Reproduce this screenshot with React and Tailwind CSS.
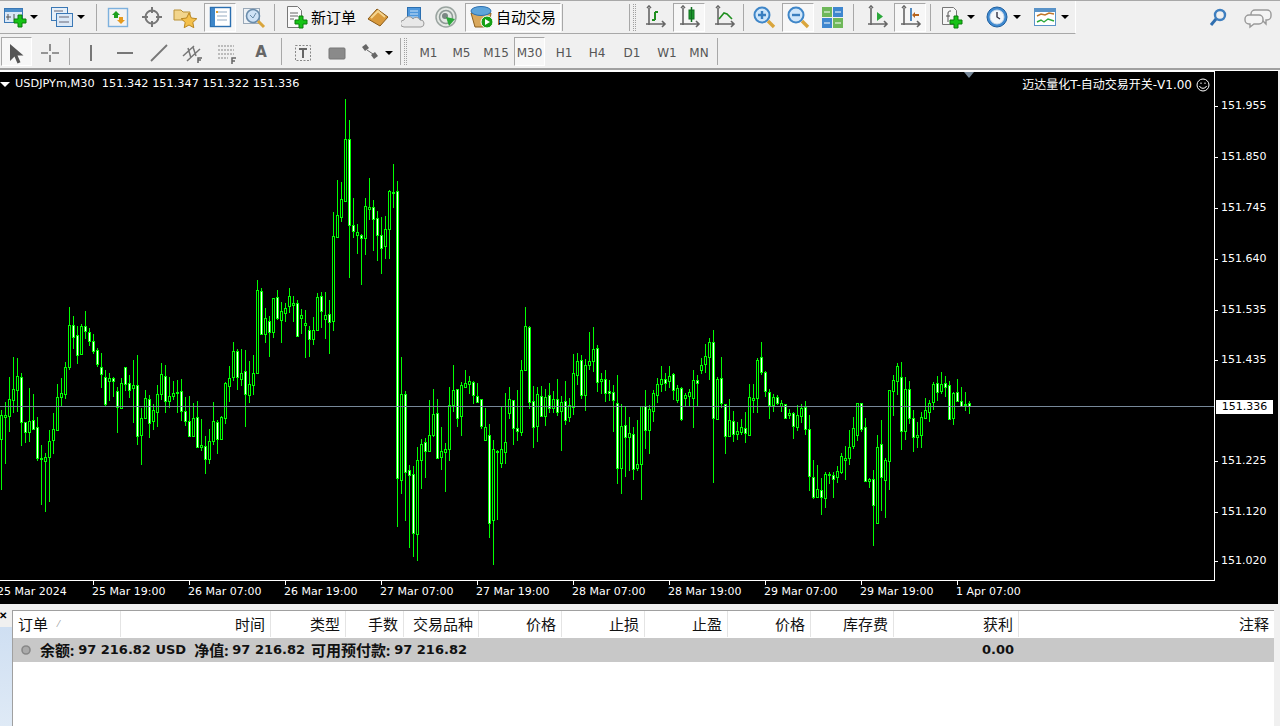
import React from 'react'

// candles read off the chart: [high, low, bodyTop, bodyBottom, isDown], y values in 3x units from a base y
const A = [[390,630,405,476,0],[365,552,405,411,0],[291,456,358,407,0],[231,400,328,360,0],[234,395,289,329,0],[279,498,292,425,1],[426,490,427,455,1],[324,485,424,455,0],[342,450,421,446,1],[411,543,442,533,1],[495,675,534,537,0],[519,696,532,542,0],[450,666,484,530,0],[400,522,448,479,0],[312,450,352,449,0],[294,378,340,352,0],[247,357,262,341,0],[82,270,136,261,0],[108,207,136,170,1],[138,252,166,224,1],[133,225,139,221,0],[94,178,139,152,1],[145,198,157,182,1],[162,221,184,212,1],[205,261,211,251,1],[219,324,262,281,1],[270,378,292,371,1],[280,362,295,302,0],[292,351,294,302,1],[321,459,334,380,1],[295,384,310,383,0],[262,333,262,311,1],[285,354,310,329,1],[240,430,316,323,0],[225,495,316,467,1],[385,555,415,464,0],[330,415,355,413,0],[345,474,358,428,1],[372,450,391,422,0],[315,441,343,395,0],[250,360,283,341,0],[255,399,289,362,1],[292,384,349,362,0],[303,360,340,347,0],[300,399,336,339,0],[297,423,334,392,1],[350,438,394,422,1],[348,471,424,468,1],[369,469,415,467,0],[363,500,412,500,1],[417,513,496,500,0],[468,582,499,536,1],[447,552,484,536,0],[366,495,424,482,0],[420,522,427,476,1],[408,480,412,476,0],[306,432,310,413,0],[259,366,295,317,0],[186,303,214,291,0],[208,330,214,292,1],[207,318,280,296,0],[209,441,274,341,1],[243,369,313,344,0],[225,345,280,314,0],[0,282,31,278,0],[25,165,34,163,1],[84,189,115,161,0],[108,231,122,157,1],[54,174,55,155,0],[30,120,52,115,1],[66,189,94,119,0],[69,126,85,98,0],[24,99,49,79,0],[48,126,69,75,0],[60,171,70,169,1],[87,162,106,113,0],[90,234,129,134,0],[138,231,151,176,1],[112,195,151,178,0],[39,150,52,149,0]]
const B = [[606,714,619,662,1],[606,747,676,686,0],[630,792,673,695,1],[366,723,439,692,0],[270,440,376,440,0],[276,396,328,380,0],[27,333,148,332,0],[90,564,148,404,1],[324,444,406,422,1],[402,492,427,434,0],[432,585,435,443,1],[324,495,349,444,0],[264,390,351,357,0],[330,483,352,386,1],[363,513,385,434,1],[381,552,436,473,1],[378,507,418,467,0],[300,507,304,416,0],[222,354,306,309,0]]
const C = [[-447,590,-416,443,1],[82,492,193,449,0],[183,573,193,425,1],[405,654,421,434,1],[408,681,433,608,1],[351,693,391,611,0],[327,477,343,389,0],[324,444,337,362,1],[210,366,316,362,0],[178,321,253,314,0],[207,387,250,383,1],[291,420,364,381,0],[339,486,358,365,0],[171,393,226,356,0],[105,246,181,224,0],[177,291,178,263,1],[156,318,166,257,0],[120,171,160,170,0],[138,192,154,161,0],[153,222,157,196,1],[159,219,199,215,1],[207,297,208,287,1],[234,330,292,329,0],[282,624,316,578,1],[330,705,358,571,0],[360,570,363,366,0],[229,414,358,398,0],[189,402,337,365,0],[171,267,208,248,0],[210,345,211,293,1],[180,333,295,302,1],[90,318,121,305,0],[-69,120,-12,120,0],[-12,237,-9,215,1],[168,354,214,290,1],[171,336,193,287,0],[168,258,199,257,1],[177,288,202,257,0],[159,249,196,235,1],[183,249,208,235,0],[147,258,208,245,1]]
const D = [[228,393,247,272,0],[183,315,244,299,1],[235,306,256,292,0],[102,285,160,262,0],[99,195,124,164,0],[105,237,121,224,1],[117,273,136,224,0],[36,150,124,134,0],[21,156,88,124,0],[75,216,85,185,1],[159,222,178,183,0],[150,246,178,218,1],[180,243,214,220,1],[195,336,217,241,1],[165,492,250,445,1],[252,522,319,443,0],[258,471,316,352,1],[291,453,340,350,0],[321,480,343,448,1],[300,453,433,443,0],[258,540,259,431,0],[210,387,259,329,1],[255,402,268,331,0],[210,306,220,272,0],[174,249,193,224,0],[138,216,178,193,0],[159,213,178,190,1],[138,204,169,184,0],[159,240,163,211,1],[195,249,205,239,0],[202,303,205,298,1],[220,261,226,235,0],[207,261,217,229,0],[150,324,181,235,0],[166,261,181,190,1],[115,162,136,151,0],[72,160,109,133,0],[54,180,67,112,0],[30,489,67,295,1],[172,300,178,296,0],[111,264,175,250,1],[253,402,253,349,1],[238,351,301,349,0],[273,366,304,343,1],[306,360,334,343,0],[297,345,322,335,0],[277,369,325,340,1],[193,346,232,346,0],[192,279,235,239,0],[115,279,121,235,0],[66,165,112,157,1],[153,231,157,214,1],[207,297,217,254,1],[222,276,232,254,0],[225,255,232,250,1]]
const E = [[150,186,160,167,0],[163,207,163,205,1],[177,207,190,196,0],[186,267,190,229,1],[165,243,196,231,0],[162,219,175,199,0],[153,255,172,238,1],[195,423,238,379,1],[330,447,382,442,1],[345,444,418,442,0],[384,495,421,442,1],[366,474,373,445,0],[366,402,372,376,0],[366,444,376,388,1],[348,399,364,382,0],[309,372,319,365,0],[288,390,325,331,0],[240,345,292,325,0],[201,297,235,289,0],[159,273,160,256,0],[160,246,160,236,1],[205,396,232,394,1],[385,414,388,394,0],[361,588,388,464,1],[255,522,292,520,0],[210,483,283,382,1],[324,504,331,391,0],[121,420,121,334,0],[75,198,91,124,0],[39,135,49,94,0],[36,300,82,244,1],[81,270,118,244,0],[93,222,118,205,1],[180,306,205,262,1],[216,294,256,260,0],[186,294,202,256,0],[144,207,181,205,0],[150,216,160,187,0],[97,180,103,157,0],[78,153,100,127,1],[66,132,103,124,0],[78,141,100,112,1],[94,209,106,208,1],[126,225,130,205,0],[87,157,127,154,1],[111,172,154,169,1],[126,183,162,166,0],[153,192,160,169,1]]

const candles = [[A,280],[B,90],[C,330],[D,320],[E,350]].flatMap(([rows, base]) =>
  rows.map(r => [
    Math.round(base + r[0] / 3),
    Math.round(base + r[1] / 3),
    Math.round(base + r[2] / 3),
    Math.round(base + r[3] / 3),
    r[4],
  ]))

const PRICES = [['151.955',105],['151.850',156],['151.745',207],['151.640',258],['151.535',309],['151.435',359],['151.225',460],['151.120',511],['151.020',560]]
const TIMES = ['25 Mar 19:00','26 Mar 07:00','26 Mar 19:00','27 Mar 07:00','27 Mar 19:00','28 Mar 07:00','28 Mar 19:00','29 Mar 07:00','29 Mar 19:00','1 Apr 07:00']
const HEAD = ['时间','类型','手数','交易品种','价格','止损','止盈','价格','库存费','获利','注释']
const TF = [['M1',33],['M5',33],['M15',36],['M30',31],['H1',38],['H4',28],['D1',42],['W1',28],['MN',36]]

const tahoma = { fontFamily: '"DejaVu Sans", sans-serif' }
const cjkOnly = { fontFamily: '"Noto Sans CJK SC", sans-serif' }
const gridCols = 'grid grid-cols-[108px_150px_75px_58px_75px_83px_83px_83px_83px_83px_125px_255px]'

function Tool({ w = 32, on, children, className = '' }) {
  return (
    <div className={`shrink-0 h-[29px] flex items-center justify-center border ${on ? 'border-t-[#a8a8a8] border-l-[#a8a8a8] border-r-white border-b-white bg-[#f7f7f7]' : 'border-transparent'} ${className}`}
      style={{ width: w }}>
      {children}
    </div>
  )
}
const Caret = () => (
  <div className="shrink-0 w-[8px] flex justify-center">
    <div className="w-0 h-0 border-x-[4px] border-x-transparent border-t-[4px] border-t-black" />
  </div>
)
const Sep = ({ ml = 0, mr = 0 }) => <div className="shrink-0 w-[1px] h-[27px] bg-[#a8a8a8]" style={{ marginLeft: ml, marginRight: mr }} />
const Gap = ({ w }) => <div className="shrink-0" style={{ width: w }} />
const Grip = () => <div className="shrink-0 w-[3px] h-[27px] border-x border-dotted border-[#a0a0a0]" />

const Ico = ({ children, w = 24, h = 24 }) => (
  <svg width={w} height={h} viewBox={`0 0 ${w} ${h}`} fill="none">{children}</svg>
)
const Plus = ({ x = 0, y = 0 }) => (
  <path transform={`translate(${x} ${y})`} d="M4 0h4v4h4v4H8v4H4V8H0V4h4z" fill="#16c316" stroke="#0a7d0a" />
)
const Axes = ({ c = '#666' }) => (
  <path d="M6 3v17M3 6h0M3 19h19M19 16l3 3-3 3M8 3L6 1 4 3" stroke={c} strokeWidth="1.6" />
)

function IcoNewChart() {
  return <Ico><rect x="1.5" y="3.5" width="18" height="14" fill="#dbe8f6" stroke="#3b78b5" /><rect x="2" y="4" width="17" height="3" fill="#4d8fcb" /><path d="M5 9v6M3 12h5M11 9v5" stroke="#555" /><Plus x={11} y={10} /></Ico>
}
function IcoProfiles() {
  return <Ico><rect x="1.5" y="2.5" width="16" height="13" fill="#e6eff8" stroke="#3b78b5" /><rect x="6.5" y="8.5" width="16" height="13" fill="#dbe8f6" stroke="#3b78b5" /><path d="M4 6h9M9 12h10M9 17h10" stroke="#667" /></Ico>
}
function IcoMarket() {
  return <Ico><rect x="2.5" y="3.5" width="19" height="18" fill="#f3f3f3" stroke="#7db1de" strokeWidth="1.4" /><path d="M10 6l4 4h-2v3H8v-3H6z" fill="#1fa01f" /><path d="M15 19l-4-4h2v-3h4v3h2z" fill="#e69a1d" /></Ico>
}
function IcoCross() {
  return <Ico><circle cx="12" cy="12" r="6.5" stroke="#777" strokeWidth="2" /><path d="M12 2v6M12 16v6M2 12h6M16 12h6" stroke="#777" strokeWidth="2" /></Ico>
}
function IcoNav() {
  return <Ico><path d="M1 5h7l2 2h7v8H1z" fill="#f2d58c" stroke="#b99136" /><path d="M16 8l2.4 5 5.4.7-4 3.7 1 5.3-4.8-2.7-4.8 2.7 1-5.3-4-3.7 5.4-.7z" fill="#f4c04c" stroke="#b98620" /></Ico>
}
function IcoTerminal() {
  return <Ico><rect x="2.5" y="2.5" width="20" height="19" fill="#fff" stroke="#2b6fb0" strokeWidth="1.4" /><rect x="3" y="3" width="4" height="18" fill="#3d86c9" /><path d="M9 7h10M9 11h10M9 15h10" stroke="#b9c7d6" strokeWidth="1.4" /><path d="M8 7h2" stroke="#e0a030" strokeWidth="2" /></Ico>
}
function IcoTester() {
  return <Ico><rect x="1.5" y="3.5" width="16" height="15" fill="#eef2f6" stroke="#9aa9b8" /><circle cx="11" cy="11" r="6.5" fill="#cfe2f5" stroke="#6a8cab" strokeWidth="1.6" /><path d="M8 10l3 3 3-5" stroke="#6a8cab" /><path d="M16 16l6 6" stroke="#d9a53c" strokeWidth="3" /></Ico>
}
function IcoOrder() {
  return <Ico><path d="M3.5 1.5h10l4 4v17h-14z" fill="#fafafa" stroke="#777" /><path d="M6 8h8M6 11h8M6 14h4" stroke="#666" /><Plus x={11} y={11} /></Ico>
}
function IcoBook() {
  return <Ico><path d="M2 14L11 4l11 8-8 9z" fill="#d99a3c" stroke="#8a5a17" /><path d="M5 13l7-7 7 6" stroke="#f5d691" strokeWidth="2" /></Ico>
}
function IcoCloud() {
  return <Ico><rect x="6.5" y="2.5" width="13" height="14" fill="#4d97dc" stroke="#2b6fb0" /><path d="M9 6h8M9 9h8M9 12h8" stroke="#cfe4f8" /><path d="M3 22a3.5 3.5 0 010-7 5 5 0 019-1 4 4 0 017 1 3.5 3.5 0 011 7z" fill="#e8e8e8" stroke="#999" /></Ico>
}
function IcoSignal() {
  return <Ico><circle cx="12" cy="12" r="10" fill="#e4e8e4" stroke="#9aa4a0" strokeWidth="1.5" /><circle cx="12" cy="12" r="6.5" stroke="#8e9a96" strokeWidth="1.5" /><circle cx="11" cy="11" r="3" fill="#7b8783" /><path d="M12 12l3 9 6-7z" fill="#2ba83a" /></Ico>
}
function IcoAuto() {
  return <Ico><path d="M1 8h20l-2 14H5z" fill="#d9a85c" stroke="#8a5f1e" /><ellipse cx="11" cy="6" rx="10" ry="4.5" fill="#5ea5db" stroke="#2b6fb0" /><circle cx="17" cy="17" r="6" fill="#16a016" stroke="#fff" /><path d="M15 14l5 3-5 3z" fill="#fff" /></Ico>
}
function IcoBars() {
  return <Ico><Axes /><path d="M12 7v8M12 7h3M9 15h3" stroke="#1f8f1f" strokeWidth="2" /></Ico>
}
function IcoCandle() {
  return <Ico><Axes /><rect x="12" y="5" width="5" height="9" fill="#1f9f2f" stroke="#0f6f1f" /><path d="M14.5 2v15" stroke="#0f6f1f" strokeWidth="1.5" /></Ico>
}
function IcoLine() {
  return <Ico><Axes /><path d="M7 14l5-6 3 1 5 5" stroke="#1f8f1f" strokeWidth="1.6" /></Ico>
}
function IcoZoom({ minus }) {
  return (
    <Ico>
      <circle cx="10" cy="10" r="7.5" fill="#cfe6fa" stroke="#3f86c8" strokeWidth="2" />
      <path d={minus ? 'M6 10h8' : 'M6 10h8M10 6v8'} stroke="#3a7fc0" strokeWidth="2.4" />
      <path d="M16 16l6 6" stroke="#d9a53c" strokeWidth="3.4" />
    </Ico>
  )
}
function IcoTile() {
  return <Ico><rect x="2" y="2" width="10" height="10" fill="#6fb85a" /><rect x="13" y="2" width="10" height="10" fill="#3f87cf" /><rect x="2" y="13" width="10" height="10" fill="#3f87cf" /><rect x="13" y="13" width="10" height="10" fill="#6fb85a" /><path d="M4 7h6M15 7h6M4 18h6M15 18h6" stroke="#fff" /></Ico>
}
function IcoScroll() {
  return <Ico><Axes /><path d="M12 7v9l6-4.5z" fill="#2ba83a" /></Ico>
}
function IcoShift() {
  return <Ico><Axes /><path d="M13 3v13" stroke="#2b6fb0" strokeWidth="1.6" /><path d="M21 9h-4V7l-3 3 3 3v-2h4z" fill="#b8641c" /></Ico>
}
function IcoIndicators() {
  return <Ico><path d="M3.5 2.5h11l3 3v14h-14z" fill="#f6f6f6" stroke="#777" /><path d="M9 17V8c0-2 2-2 3-2M7 11h4" stroke="#555" /><Plus x={11} y={11} /></Ico>
}
function IcoClock() {
  return <Ico><circle cx="12" cy="12" r="10" fill="#3f8ad0" stroke="#1f5f9f" /><circle cx="12" cy="12" r="7" fill="#f4f7fa" stroke="#cfdcea" /><path d="M12 7v5l3 2" stroke="#334" strokeWidth="1.4" /></Ico>
}
function IcoTemplate() {
  return <Ico><rect x="1.5" y="3.5" width="21" height="17" fill="#fff" stroke="#5a93c8" /><rect x="2" y="4" width="20" height="3" fill="#5a93c8" /><path d="M4 11l4-2 4 1 4-2 5 1" stroke="#c0762a" strokeWidth="1.4" /><path d="M4 17l4-2 3 2 4-3 6 2" stroke="#2ba83a" strokeWidth="1.4" /></Ico>
}
function IcoSearch() {
  return <Ico w={20} h={20}><circle cx="12" cy="7" r="5" stroke="#3f7fbf" strokeWidth="2.4" /><path d="M8 11l-5 6" stroke="#2f6fb0" strokeWidth="3" /></Ico>
}
function IcoChat() {
  return <Ico w={30} h={22}><path d="M12 3h12a4 4 0 014 4v2a4 4 0 01-4 4h-1v4l-4-4h-7a4 4 0 01-4-4V7a4 4 0 014-4z" fill="#f4f4f4" stroke="#999" strokeWidth="1.4" /><path d="M6 8h10a4 4 0 014 4v1a4 4 0 01-4 4h-5l-4 3v-3H6a4 4 0 01-4-4v-1a4 4 0 014-4z" fill="#f4f4f4" stroke="#999" strokeWidth="1.4" /></Ico>
}

function Toolbar1() {
  return (
    <div className="h-[33px] flex items-center">
      <div className="w-[1076px] h-[33px] flex items-center border-r border-b border-r-white border-b-[#a8a8a8]">
        <Tool w={30}><IcoNewChart /></Tool><Caret />
        <Gap w={9} />
        <Tool w={30}><IcoProfiles /></Tool><Caret />
        <Sep ml={11} mr={5} />
        <Tool><IcoMarket /></Tool><Gap w={2} />
        <Tool><IcoCross /></Tool><Gap w={1} />
        <Tool><IcoNav /></Tool><Gap w={3} />
        <Tool on><IcoTerminal /></Tool><Gap w={2} />
        <Tool><IcoTester /></Tool>
        <Sep ml={4} mr={5} />
        <Tool w={79} className="gap-[3px] justify-start pl-[3px]">
          <IcoOrder />
          <span className="text-[15px] text-black" style={cjkOnly}>新订单</span>
        </Tool>
        <Gap w={3} />
        <Tool><IcoBook /></Tool><Gap w={3} />
        <Tool><IcoCloud /></Tool><Gap w={1} />
        <Tool><IcoSignal /></Tool><Gap w={3} />
        <Tool w={96} on className="gap-[2px] justify-start pl-[4px]">
          <IcoAuto />
          <span className="text-[15px] text-black" style={cjkOnly}>自动交易</span>
        </Tool>
        <Sep ml={1} mr={66} />
        <Sep mr={3} />
        <Grip />
        <Gap w={3} />
        <Tool><IcoBars /></Tool><Gap w={2} />
        <Tool on><IcoCandle /></Tool><Gap w={3} />
        <Tool><IcoLine /></Tool>
        <Sep ml={3} mr={4} />
        <Tool><IcoZoom /></Tool><Gap w={2} />
        <Tool on><IcoZoom minus /></Tool><Gap w={2} />
        <Tool><IcoTile /></Tool>
        <Sep ml={5} mr={7} />
        <Tool><IcoScroll /></Tool><Gap w={1} />
        <Tool on><IcoShift /></Tool>
        <Sep ml={4} mr={4} />
        <Tool><IcoIndicators /></Tool><Caret />
        <Gap w={6} />
        <Tool><IcoClock /></Tool><Caret />
        <Gap w={8} />
        <Tool><IcoTemplate /></Tool><Caret />
      </div>
      <div className="ml-[132px] w-[20px] flex justify-center"><IcoSearch /></div>
      <div className="ml-[15px]"><IcoChat /></div>
    </div>
  )
}

function Toolbar2() {
  return (
    <div className="h-[34px] flex items-center pl-[1px] text-[12px] text-[#555] [&>div]:pt-[3px]" style={tahoma}>
      <Tool w={31} on>
        <Ico><path d="M5 3v17l4.5-4.5 3 7 3-1.3-3-6.7h6z" fill="#555" /></Ico>
      </Tool>
      <Gap w={2} />
      <Tool><Ico><path d="M12 3v7M12 14v7M3 12h7M14 12h7" stroke="#777" strokeWidth="1.6" /></Ico></Tool>
      <Sep ml={3} mr={5} />
      <Tool><Ico><path d="M12 4v16" stroke="#777" strokeWidth="2" /></Ico></Tool><Gap w={2} />
      <Tool><Ico><path d="M4 12h16" stroke="#777" strokeWidth="2" /></Ico></Tool><Gap w={2} />
      <Tool><Ico><path d="M4 20L20 4" stroke="#777" strokeWidth="1.8" /></Ico></Tool><Gap w={2} />
      <Tool><Ico><path d="M2 15L13 5M6 20L19 8M7 7l3 10M12 6l3 9" stroke="#777" strokeWidth="1.5" /><path d="M17 22v-5h4M17 19h3" stroke="#666" strokeWidth="1.5" /></Ico></Tool><Gap w={2} />
      <Tool><Ico><path d="M3 5h16M3 9h16M3 13h16M3 17h10" stroke="#888" strokeDasharray="2 1" /><path d="M17 23v-6h4M17 20h3" stroke="#666" strokeWidth="1.5" /></Ico></Tool><Gap w={2} />
      <Tool><span className="text-[15px] font-bold text-[#666]">A</span></Tool>
      <Sep ml={4} mr={5} />
      <Tool>
        <Ico><rect x="4.5" y="4.5" width="15" height="15" stroke="#888" strokeDasharray="2 1.5" /><path d="M8 8h8M12 8v9" stroke="#666" strokeWidth="2" /></Ico>
      </Tool><Gap w={2} />
      <Tool><Ico><rect x="4" y="7" width="16" height="11" rx="1" fill="#8a8a8a" stroke="#777" /></Ico></Tool><Gap w={3} />
      <Tool w={28}><Ico><path d="M4 6l4-3 3 4-4 3zM13 14l4-3 3 4-4 3z" fill="#666" /><path d="M9 9l6 4" stroke="#666" /></Ico></Tool>
      <Gap w={1} /><Caret />
      <Sep ml={7} mr={3} />
      <Grip />
      <Gap w={5} />
      {TF.map(([t, w]) => <Tool key={t} w={w} on={t === 'M30'}>{t}</Tool>)}
      <Sep />
    </div>
  )
}

function Chart() {
  return (
    <div className="relative w-[1215px] border-t border-r border-b border-white">
      <svg width="1214" height="508" viewBox="0 72 1214 508" className="block" shapeRendering="crispEdges">
        {candles.map((c, i) => {
          const x = 1 + i * 4
          const h = Math.max(c[3] - c[2], 1)
          return (
            <g key={i}>
              <rect x={x} y={c[0]} width="1" height={Math.max(c[1] - c[0], 1)} fill="#00ff00" />
              <rect x={x - 1} y={c[2]} width="3" height={h + 1} fill="#00ff00" />
              {h > 1 && <rect x={x} y={c[2] + 1} width="1" height={h - 1} fill={c[4] ? '#ffffff' : '#000000'} />}
            </g>
          )
        })}
        <rect x="0" y="406" width="1214" height="1" fill="#778899" />
      </svg>
      <div className="absolute left-0 top-[4px] flex items-center text-white" style={tahoma}>
        <div className="w-0 h-0 border-x-[5px] border-x-transparent border-t-[5px] border-t-white" />
        <span className="ml-[5px] text-[11.3px] whitespace-pre">USDJPYm,M30  151.342 151.347 151.322 151.336</span>
      </div>
      <div className="absolute left-[964px] top-0 w-0 h-0 border-x-[5px] border-x-transparent border-t-[6px] border-t-[#778899]" />
      <div className="absolute right-[4px] top-[4px] flex items-center gap-[4px] text-white" style={{ fontFamily: '"DejaVu Sans", "Noto Sans CJK SC", sans-serif' }}>
        <span className="text-[12px]">迈达量化T-自动交易开关-V1.00</span>
        <svg width="14" height="14" viewBox="0 0 14 14" fill="none">
          <circle cx="7" cy="7" r="6" stroke="#fff" />
          <path d="M3.5 8c1 3 6 3 7 0" stroke="#fff" />
          <path d="M5 4.5v1.5M9 4.5v1.5" stroke="#fff" />
        </svg>
      </div>
    </div>
  )
}

function PriceAxis() {
  return (
    <div className="relative w-[63px] text-[11px] text-white" style={tahoma}>
      {PRICES.map(([p, y]) => (
        <div key={p} className="absolute left-0 flex items-center" style={{ top: y - 78 }}>
          <div className="w-[3px] h-[1px] bg-white mr-[3px]" />{p}
        </div>
      ))}
      <div className="absolute left-[1px] top-[329px] w-[57px] h-[14px] bg-white text-black flex items-center justify-center">151.336</div>
    </div>
  )
}

function TimeAxis() {
  return (
    <div className="h-[23px] relative overflow-hidden text-[11px] text-white flex" style={tahoma}>
      <div className="shrink-0 w-[92px] -ml-[3px] mr-[3px] pt-[3px]">25 Mar 2024</div>
      {TIMES.map(t => (
        <div key={t} className="shrink-0 w-[96px] relative pt-[3px] whitespace-nowrap">
          <div className="absolute left-[1px] top-0 w-[1px] h-[4px] bg-white" />
          {t}
        </div>
      ))}
    </div>
  )
}

function Money({ children }) {
  return <span className="text-[13px]" style={tahoma}>{children}</span>
}

function Terminal() {
  const cjk = { fontFamily: '"Noto Sans", "Noto Sans CJK SC", sans-serif' }
  return (
    <div className="flex h-[122px] bg-[#f0f0f0]">
      <div className="w-[12px] shrink-0 flex flex-col">
        <div className="h-[23px] pt-[6px] -ml-[1px] text-[10px] leading-[11px] font-bold text-black">✕</div>
        <div className="flex-1 bg-gradient-to-b from-[#cfdff2] to-[#dfeaf6]" />
      </div>
      <div className="w-[1262px] mt-[6px] bg-white border-t border-l border-[#a0a0a0]" style={cjk}>
        <div className={`${gridCols} h-[26px] text-[15px] text-[#111]`}>
          <div className="flex items-center gap-[10px] pl-[5px] border-r border-[#e4e4e4]">订单<span className="text-[9px] text-[#999]">⁄</span></div>
          {HEAD.map((h, i) => (
            <div key={i} className={`flex items-center justify-end pr-[5px] ${i < 10 ? 'border-r border-[#e4e4e4]' : ''}`}>{h}</div>
          ))}
        </div>
        <div className={`${gridCols} h-[24px] mt-[1px] bg-[#c8c8c8] text-[15px] font-bold text-[#111]`}>
          <div className="col-span-10 flex items-center pl-[7px] whitespace-pre">
            <svg width="12" height="12" viewBox="0 0 12 12" className="mr-[8px]"><circle cx="6" cy="6" r="4" fill="#aaa" stroke="#888" strokeWidth="1.6" /></svg>
            <span>余额: </span><Money>97 216.82 USD</Money>
            <span className="ml-[8px]">净值: </span><Money>97 216.82</Money>
            <span className="ml-[6px]">可用预付款: </span><Money>97 216.82</Money>
          </div>
          <div className="flex items-center justify-end pr-[5px]"><Money>0.00</Money></div>
          <div />
        </div>
      </div>
    </div>
  )
}

export default function App() {
  return (
    <div className="w-[1280px] h-[726px] overflow-hidden bg-[#f0f0f0] flex flex-col">
      <div className="h-[1px] bg-[#a8a8a8]" />
      <Toolbar1 />
      <Toolbar2 />
      <div className="h-[2px] bg-[#a0a0a0]" />
      <div className="h-[1px] bg-white" />
      <div className="w-[1278px] h-[533px] bg-black flex flex-col">
        <div className="flex">
          <Chart />
          <PriceAxis />
        </div>
        <TimeAxis />
      </div>
      <Terminal />
    </div>
  )
}
